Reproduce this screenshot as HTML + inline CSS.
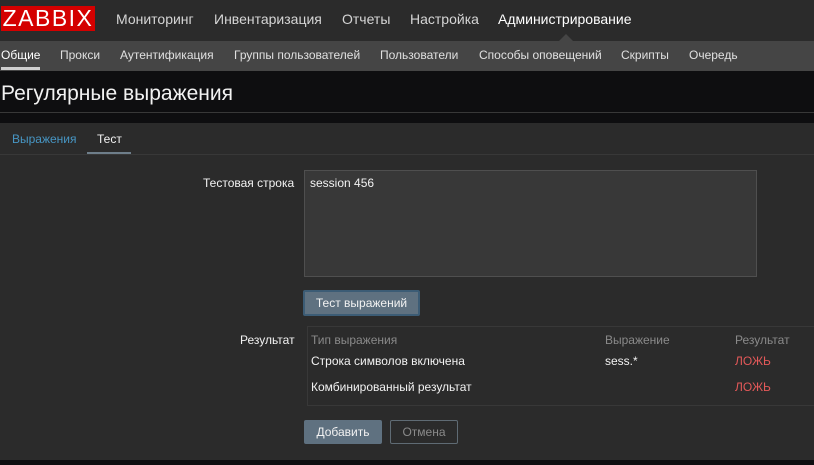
<!DOCTYPE html>
<html><head><meta charset="utf-8"><style>
*{margin:0;padding:0;box-sizing:border-box}
body{width:814px;height:465px;background:#0e0e10;font-family:"Liberation Sans",Arial,sans-serif;font-size:12px;color:#f2f2f2;position:relative;overflow:hidden}
.abs{position:absolute;white-space:nowrap}
#top{position:absolute;left:0;top:0;width:814px;height:41px;background:#2b2b2b}
#logo{position:absolute;left:1px;top:6px;width:94px;height:25px;background:#d40000;color:#fff;font-size:23px;line-height:25px;text-align:center;letter-spacing:1.5px}
.mn{top:11px;font-size:14px;color:#d5d5d5}
#sub{position:absolute;left:0;top:41px;width:814px;height:30px;background:#454545}
.sn{top:48px;font-size:12px;color:#e0e0e0}
#panel{position:absolute;left:0;top:123px;width:814px;height:337px;background:#2b2b2b}
</style></head><body>
<div id="top"></div>
<div id="logo">ZABBIX</div>
<div class="abs mn" style="left:116px">Мониторинг</div>
<div class="abs mn" style="left:214px">Инвентаризация</div>
<div class="abs mn" style="left:342px">Отчеты</div>
<div class="abs mn" style="left:410px">Настройка</div>
<div class="abs mn" style="left:498px;color:#fff">Администрирование</div>
<div class="abs" style="top:34px;width:0;height:0;border-left:7px solid transparent;border-right:7px solid transparent;border-bottom:7px solid #454545;left:559px"></div>
<div id="sub"></div>
<div class="abs sn" style="left:1px;color:#fff">Общие</div>
<div class="abs" style="left:1px;top:67px;width:39px;height:3px;background:#cfcfcf"></div>
<div class="abs sn" style="left:60px">Прокси</div>
<div class="abs sn" style="left:120px">Аутентификация</div>
<div class="abs sn" style="left:234px">Группы пользователей</div>
<div class="abs sn" style="left:380px">Пользователи</div>
<div class="abs sn" style="left:479px">Способы оповещений</div>
<div class="abs sn" style="left:621px">Скрипты</div>
<div class="abs sn" style="left:689px">Очередь</div>
<div class="abs" style="left:1px;top:82px;font-size:21px;color:#f2f2f2">Регулярные выражения</div>
<div class="abs" style="left:0;top:112px;width:814px;height:1px;background:#383838"></div>
<div id="panel"></div>
<div class="abs" style="left:12px;top:132px;color:#4796c4;font-size:12px">Выражения</div>
<div class="abs" style="left:97px;top:132px;color:#f2f2f2;font-size:12px">Тест</div>
<div class="abs" style="left:87px;top:152px;width:44px;height:3px;background:#6e7e8a"></div>
<div class="abs" style="left:0;top:154px;width:814px;height:1px;background:#383838"></div>
<div class="abs" style="left:203px;top:176px">Тестовая строка</div>
<div class="abs" style="left:304px;top:170px;width:453px;height:107px;background:#383838;border:1px solid #4f4f4f"></div>
<div class="abs" style="left:310px;top:176px">session 456</div>
<div class="abs" style="left:303px;top:290px;width:117px;height:26px;background:#5f7180;border:2px solid #3c5c75;border-radius:2px;text-align:center;line-height:22px">Тест выражений</div>
<div class="abs" style="left:240px;top:333px">Результат</div>
<div class="abs" style="left:307px;top:326px;width:520px;height:80px;border:1px solid #383838"></div>
<div class="abs" style="left:311px;top:333px;color:#8a8a8a">Тип выражения</div>
<div class="abs" style="left:605px;top:333px;color:#8a8a8a">Выражение</div>
<div class="abs" style="left:735px;top:333px;color:#8a8a8a">Результат</div>
<div class="abs" style="left:311px;top:354px">Строка символов включена</div>
<div class="abs" style="left:605px;top:354px">sess.*</div>
<div class="abs" style="left:735px;top:354px;color:#e45959">ЛОЖЬ</div>
<div class="abs" style="left:311px;top:380px">Комбинированный результат</div>
<div class="abs" style="left:735px;top:380px;color:#e45959">ЛОЖЬ</div>
<div class="abs" style="left:304px;top:420px;width:78px;height:24px;background:#5f7180;border-radius:2px;text-align:center;line-height:24px">Добавить</div>
<div class="abs" style="left:390px;top:420px;width:68px;height:24px;border:1px solid #5f6b74;border-radius:2px;text-align:center;line-height:22px;color:#8a8a8a">Отмена</div>
</body></html>
